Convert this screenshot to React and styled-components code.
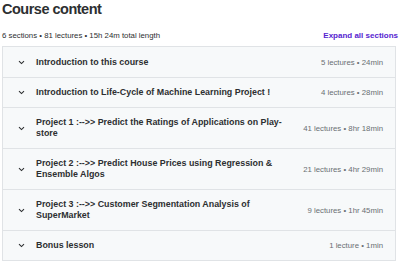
import React from 'react';
import styled, { createGlobalStyle } from 'styled-components';

const Global = createGlobalStyle`
  body {
    margin: 0;
    background: #ffffff;
    font-family: "Liberation Sans", Arial, sans-serif;
    color: #2d2f31;
  }
`;

const Page = styled.div`
  width: 400px;
  height: 261px;
  overflow: hidden;
  padding: 0 4px 0 2px;
  box-sizing: border-box;
`;

const Title = styled.h2`
  margin: 0;
  padding-top: 1px;
  font-size: 14.5px;
  line-height: 17px;
  font-weight: 700;
  letter-spacing: -0.5px;
`;

const Summary = styled.div`
  display: flex;
  justify-content: space-between;
  align-items: baseline;
  margin-top: 13px;
  height: 15px;
  font-size: 7.8px;
  color: #2d2f31;
`;

const ExpandAll = styled.button`
  border: none;
  background: none;
  padding: 0;
  margin-right: -2px;
  font-family: inherit;
  font-size: 8px;
  font-weight: 700;
  color: #5624d0;
  cursor: pointer;
`;

const Sections = styled.div`
  border: 1px solid #e0e3e6;
  border-bottom: none;
`;

const Row = styled.div`
  display: flex;
  align-items: center;
  padding: ${p => (p.$first ? '10px' : '9px')} 12px 9px 15px;
  background: #f7f9fa;
  border-bottom: 1px solid #e0e3e6;
`;

const Chevron = styled.svg`
  width: 7px;
  height: 5px;
  flex: none;
  margin-right: 11px;
`;

const SectionTitle = styled.span`
  flex: 1;
  font-size: 8.9px;
  line-height: 11px;
  font-weight: 700;
  max-width: 255px;
`;

const Meta = styled.span`
  margin-left: auto;
  font-size: 7.8px;
  line-height: 11px;
  color: #6a6f73;
  white-space: nowrap;
`;

const sections = [
  ['Introduction to this course', '5 lectures • 24min'],
  ['Introduction to Life-Cycle of Machine Learning Project !', '4 lectures • 28min'],
  ['Project 1 :-->> Predict the Ratings of Applications on Play-store', '41 lectures • 8hr 18min'],
  ['Project 2 :-->> Predict House Prices using Regression & Ensemble Algos', '21 lectures • 4hr 29min'],
  ['Project 3 :-->> Customer Segmentation Analysis of SuperMarket', '9 lectures • 1hr 45min'],
  ['Bonus lesson', '1 lecture • 1min'],
];

export default function App() {
  return (
    <Page>
      <Global />
      <Title>Course content</Title>
      <Summary>
        <span>6 sections • 81 lectures • 15h 24m total length</span>
        <ExpandAll>Expand all sections</ExpandAll>
      </Summary>
      <Sections>
        {sections.map(([title, meta], i) => (
          <Row key={title} $first={i === 0}>
            <Chevron viewBox="0 0 7 5">
              <path d="M1 1.2 L3.5 3.6 L6 1.2" fill="none" stroke="#2d2f31" strokeWidth="1.1" />
            </Chevron>
            <SectionTitle>{title}</SectionTitle>
            <Meta>{meta}</Meta>
          </Row>
        ))}
      </Sections>
    </Page>
  );
}
